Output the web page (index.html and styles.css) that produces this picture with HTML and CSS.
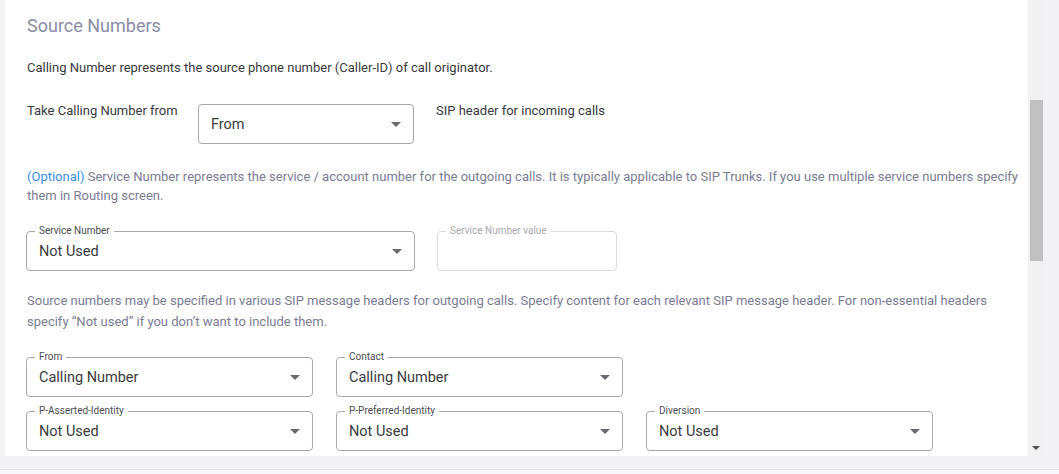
FILE: index.html
```html
<!DOCTYPE html>
<html lang="en">
<head>
    <meta charset="UTF-8">
    <meta name="viewport" content="width=device-width, initial-scale=1.0">
    <title>Source Numbers</title>
    <link rel="stylesheet" href="styles.css">
</head>
<body>
    <div class="frame">
        <div class="content">
            <h2 class="section-title">Source Numbers</h2>

            <p class="intro">Calling Number represents the source phone number (Caller-ID) of call originator.</p>

            <div class="take-row">
                <span class="take-label">Take Calling Number from</span>
                <div class="select-box take-select">
                    <span class="select-value">From</span>
                    <span class="arrow"></span>
                </div>
                <span class="take-hint">SIP header for incoming calls</span>
            </div>

            <p class="note"><span class="optional">(Optional)</span> Service Number represents the service / account number for the outgoing calls. It is typically applicable to SIP Trunks. If you use multiple service numbers specify them in Routing screen.</p>

            <div class="service-row">
                <div class="select-box service-select">
                    <span class="field-label">Service Number</span>
                    <span class="select-value">Not Used</span>
                    <span class="arrow"></span>
                </div>
                <div class="select-box value-box disabled">
                    <span class="field-label">Service Number value</span>
                </div>
            </div>

            <p class="note headers-note">Source numbers may be specified in various SIP message headers for outgoing calls. Specify content for each relevant SIP message header. For non-essential headers specify “Not used” if you don’t want to include them.</p>

            <div class="header-grid">
                <div class="select-box">
                    <span class="field-label">From</span>
                    <span class="select-value">Calling Number</span>
                    <span class="arrow"></span>
                </div>
                <div class="select-box">
                    <span class="field-label">Contact</span>
                    <span class="select-value">Calling Number</span>
                    <span class="arrow"></span>
                </div>
                <div class="grid-spacer"></div>
                <div class="select-box">
                    <span class="field-label">P-Asserted-Identity</span>
                    <span class="select-value">Not Used</span>
                    <span class="arrow"></span>
                </div>
                <div class="select-box">
                    <span class="field-label">P-Preferred-Identity</span>
                    <span class="select-value">Not Used</span>
                    <span class="arrow"></span>
                </div>
                <div class="select-box">
                    <span class="field-label">Diversion</span>
                    <span class="select-value">Not Used</span>
                    <span class="arrow"></span>
                </div>
            </div>
        </div>

        <div class="scrollbar">
            <div class="scroll-thumb"></div>
            <span class="scroll-down"></span>
        </div>
    </div>
    <div class="footer-line"></div>
</body>
</html>
```

FILE: styles.css
```css
body {
    margin: 0;
    background-color: #f3f3f5;
    font-family: Roboto, "Liberation Sans", Arial, sans-serif;
    overflow: hidden;
}

.frame {
    display: flex;
    height: 456px;
    margin-left: 5px;
    width: 1039px;
}

.content {
    flex: 1;
    background-color: #fff;
    padding: 0 4px 0 21px;
    overflow: hidden;
}

.section-title {
    margin: 15px 0 0 1px;
    font-size: 18px;
    line-height: 22px;
    font-weight: 400;
    color: #8b8ca4;
}

.intro {
    margin: 22px 0 0 1px;
    font-size: 13px;
    line-height: 18px;
    color: #3a3a3f;
}

.take-row {
    display: flex;
    align-items: flex-start;
    margin-top: 27px;
}

.take-label,
.take-hint {
    font-size: 13px;
    line-height: 14px;
    color: #3a3a3f;
}

.take-label {
    width: 171px;
    padding-left: 1px;
}

.take-hint {
    margin-left: 22px;
}

.note {
    margin: 23px 0 0 1px;
    font-size: 13px;
    line-height: 19px;
    color: #7b7c94;
}

.optional {
    color: #3a8ee4;
}

/* outlined select, label sits on the top border */
.select-box {
    position: relative;
    box-sizing: border-box;
    height: 40px;
    border: 1px solid #a9a9ad;
    border-radius: 4px;
    display: flex;
    align-items: center;
    padding: 0 12px;
}

.take-select {
    width: 216px;
}

.select-value {
    font-size: 14.5px;
    color: #3b3b40;
}

.field-label {
    position: absolute;
    top: -7px;
    left: 8px;
    padding: 0 4px;
    background-color: #fff;
    font-size: 10px;
    line-height: 12px;
    color: #4d4d52;
}

.arrow {
    position: absolute;
    right: 12px;
    top: 17px;
    width: 0;
    height: 0;
    border-left: 5px solid transparent;
    border-right: 5px solid transparent;
    border-top: 5px solid #6a6a6e;
}

.service-row {
    display: flex;
    gap: 22px;
    margin-top: 26px;
}

.service-select {
    width: 389px;
}

.value-box {
    width: 180px;
}

.select-box.disabled {
    border-color: #dcdce0;
}

.select-box.disabled .field-label {
    color: #a9a9b0;
}

.headers-note {
    margin-top: 19px;
    line-height: 21px;
}

.header-grid {
    display: grid;
    grid-template-columns: repeat(3, 287px);
    column-gap: 23px;
    row-gap: 14px;
    margin-top: 25px;
}

.scrollbar {
    position: relative;
    width: 16px;
    background-color: #f1f1f1;
}

.scroll-thumb {
    position: absolute;
    left: 2px;
    top: 100px;
    width: 13px;
    height: 161px;
    background-color: #c1c1c1;
}

.scroll-down {
    position: absolute;
    left: 4px;
    bottom: 6px;
    width: 0;
    height: 0;
    border-left: 4px solid transparent;
    border-right: 4px solid transparent;
    border-top: 4px solid #505050;
}

.footer-line {
    margin-top: 13px;
    border-top: 1px solid #e3e3e7;
    height: 10px;
    background-color: #f8f8fa;
}
```
